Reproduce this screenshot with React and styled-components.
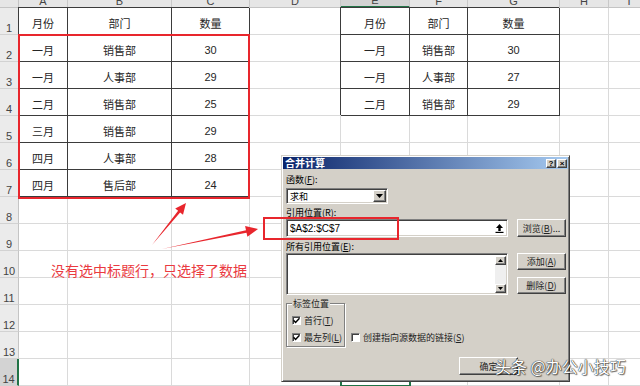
import styled, { createGlobalStyle, css } from 'styled-components';

const GlobalStyle = createGlobalStyle`
  *, *::before, *::after { box-sizing: border-box; }
  html, body { margin: 0; padding: 0; background: #fff; }
  body { font-family: "Liberation Sans", "Noto Sans CJK SC", sans-serif; }
`;

const GRID = '#dadada';
const EDGE = '#3b3b3b';
const GREEN = '#217346';
const RED = '#e8262d';

const Page = styled.div`
  position: relative;
  width: 640px;
  height: 386px;
  overflow: hidden;
  background: #fff;
`;

const Sheet = styled.div`
  display: grid;
  grid-template-columns: 19px 49px 104px 78px 91px 69px 58px 92px 49px 41px;
  grid-template-rows: 8px repeat(14, 27px);
`;

const Corner = styled.div`
  background: #e6e6e6;
  border-right: 1px solid #c4c4c4;
  border-bottom: 1px solid #c4c4c4;
`;

const ColHead = styled.div`
  display: flex;
  align-items: flex-end;
  justify-content: center;
  overflow: hidden;
  font-size: 11px;
  line-height: 11px;
  color: #444;
  background: ${p => (p.$active ? '#d3d3d3' : '#e6e6e6')};
  border-right: 1px solid #c8c8c8;
  border-bottom: ${p => (p.$active ? `2px solid ${GREEN}` : '1px solid #c4c4c4')};
`;

const RowHead = styled.div`
  display: flex;
  align-items: flex-end;
  justify-content: center;
  font-size: 11px;
  line-height: 12px;
  color: #444;
  background: ${p => (p.$active ? '#d3d3d3' : '#ebebeb')};
  border-right: ${p => (p.$active ? `2px solid ${GREEN}` : '1px solid #c4c4c4')};
  border-bottom: 1px solid #d2d2d2;
`;

const Cell = styled.div`
  display: flex;
  align-items: center;
  justify-content: center;
  padding-top: 4px;
  font-size: 11px;
  color: #262626;
  white-space: nowrap;
  border-right: 1px solid ${p => (p.$boxed ? EDGE : GRID)};
  border-bottom: 1px solid ${p => (p.$boxed ? EDGE : GRID)};
  ${p => p.$boxed && css`box-shadow: -1px -1px 0 ${EDGE};`}
  ${p =>
    p.$selected &&
    css`
      position: relative;
      z-index: 1;
      outline: 2px solid ${GREEN};
      outline-offset: -1px;
    `}
`;

/* ---------- dialog ---------- */

const sunken = css`
  background: #fff;
  border: 1px solid;
  border-color: #808080 #fff #fff #808080;
  box-shadow: inset 1px 1px 0 #404040, inset -1px -1px 0 #d4d0c8;
`;

const raised = css`
  background: #d4d0c8;
  border: 1px solid;
  border-color: #fff #404040 #404040 #fff;
  box-shadow: inset -1px -1px 0 #808080;
`;

const Dialog = styled.div`
  position: absolute;
  z-index: 2;
  left: 281px;
  top: 155px;
  width: 289px;
  height: 227px;
  padding: 1px;
  background: #d4d0c8;
  border: 1px solid;
  border-color: #d4d0c8 #404040 #404040 #d4d0c8;
  box-shadow: inset 1px 1px 0 #fff, inset -1px -1px 0 #808080;
  font-family: "Noto Sans CJK SC", sans-serif;
  font-size: 9px;
  color: #000;
`;

const TitleBar = styled.div`
  display: flex;
  align-items: center;
  justify-content: space-between;
  height: 12px;
  padding: 0 1px 0 2px;
  background: linear-gradient(to right, #0a246a, #a6caf0);
`;

const Title = styled.span`
  color: #fff;
  font-weight: 700;
  font-size: 10px;
  line-height: 12px;
`;

const TitleButtons = styled.div`
  display: flex;
  gap: 1px;
`;

const TitleBtn = styled.div`
  ${raised};
  width: 10px;
  height: 9px;
  display: flex;
  align-items: center;
  justify-content: center;
  font-family: "Liberation Sans", sans-serif;
  font-weight: 700;
  font-size: 8px;
  line-height: 7px;
  color: #000;
`;

const Body = styled.div`
  padding: 0 2px 0 3px;
`;

const Label = styled.div`
  line-height: 11px;
  white-space: nowrap;
  margin-top: ${p => p.$mt}px;
`;

const Select = styled.div`
  ${sunken};
  width: 102px;
  height: 16px;
  margin-top: 3px;
  display: flex;
  align-items: center;
  justify-content: space-between;
  padding: 0 1px 0 3px;
`;

const DropBtn = styled.div`
  ${raised};
  width: 13px;
  height: 12px;
  display: flex;
  align-items: center;
  justify-content: center;
`;

const Row = styled.div`
  display: flex;
  align-items: ${p => p.$align || 'flex-start'};
  gap: ${p => p.$gap ?? 9}px;
  margin-top: ${p => p.$mt || 0}px;
`;

const Field = styled.div`
  ${sunken};
  width: 222px;
  height: 18px;
  display: flex;
  align-items: center;
  justify-content: space-between;
  padding: 0 3px 0 3px;
  font-family: "Liberation Sans", sans-serif;
  font-size: 10px;
`;

const Button = styled.div`
  ${raised};
  width: ${p => p.$w || 49}px;
  height: ${p => p.$h || 18}px;
  display: flex;
  align-items: center;
  justify-content: center;
  white-space: nowrap;
  font-size: 9px;
  color: #222;
`;

const ButtonStack = styled.div`
  display: flex;
  flex-direction: column;
  gap: 7px;
`;

const ListBox = styled.div`
  ${sunken};
  width: 222px;
  height: 42px;
  display: flex;
  justify-content: flex-end;
  padding: 2px 1px 1px 2px;
`;

const ScrollBar = styled.div`
  width: 11px;
  display: flex;
  flex-direction: column;
  background: #efefef;
`;

const ScrollArrow = styled.div`
  ${raised};
  height: 9px;
  display: flex;
  align-items: center;
  justify-content: center;
`;

const ScrollTrack = styled.div`
  flex: 1;
`;

const Group = styled.fieldset`
  margin: 3px 0 0;
  padding: 0 3px 3px 5px;
  width: 59px;
  min-width: 0;
  border: 1px solid #808080;
  box-shadow: inset 1px 1px 0 #fff, 1px 1px 0 #fff;
`;

const GroupTitle = styled.legend`
  margin-left: 0;
  padding: 0 1px;
  line-height: 11px;
  font-size: 9px;
  background: #d4d0c8;
  color: #222;
`;

const CheckRow = styled.div`
  display: flex;
  align-items: center;
  gap: 3px;
  line-height: 11px;
  white-space: nowrap;
  margin-top: ${p => p.$mt || 0}px;
  margin-bottom: ${p => p.$mb || 0}px;
  margin-left: ${p => p.$ml || 0}px;
  color: #222;
`;

const Box = styled.span`
  width: 9px;
  height: 9px;
  flex: none;
  display: flex;
  align-items: center;
  justify-content: center;
  background: #fff;
  border: 1px solid;
  border-color: #808080 #fff #fff #808080;
  box-shadow: inset 1px 1px 0 #404040;
`;

const Footer = styled.div`
  display: flex;
  justify-content: flex-end;
  margin-top: 10px;
  padding-right: 48px;
`;

/* ---------- annotations ---------- */

const Frame = styled.div`
  position: absolute;
  z-index: 3;
  left: ${p => p.$x}px;
  top: ${p => p.$y}px;
  width: ${p => p.$w}px;
  height: ${p => p.$h}px;
  border: 2px solid ${RED};
  pointer-events: none;
`;

const Note = styled.div`
  position: absolute;
  z-index: 3;
  left: 51px;
  top: 262px;
  font-family: "Noto Sans CJK SC", sans-serif;
  font-size: 14px;
  line-height: 16px;
  color: #ea3a3f;
  white-space: nowrap;
`;

const Arrows = styled.svg`
  position: absolute;
  z-index: 3;
  left: 0;
  top: 0;
  pointer-events: none;
`;

const Watermark = styled.div`
  position: absolute;
  z-index: 4;
  left: 495px;
  top: 357px;
  font-family: "Noto Sans CJK SC", sans-serif;
  font-size: 16px;
  line-height: 18px;
  color: #fff;
  white-space: nowrap;
  text-shadow: 0 0 1px #222, 0 0 1px #222, 1px 1px 1px rgba(0, 0, 0, 0.5);
`;

const COLS = ['A', 'B', 'C', 'D', 'E', 'F', 'G', 'H', 'I'];

const LEFT = [
  ['月份', '部门', '数量'],
  ['一月', '销售部', '30'],
  ['一月', '人事部', '29'],
  ['二月', '销售部', '25'],
  ['三月', '销售部', '29'],
  ['四月', '人事部', '28'],
  ['四月', '售后部', '24'],
];

const RIGHT = [
  ['月份', '部门', '数量'],
  ['一月', '销售部', '30'],
  ['一月', '人事部', '27'],
  ['二月', '销售部', '29'],
];

const cellAt = (r, c) => {
  if (c < 3 && r < LEFT.length) return { text: LEFT[r][c], boxed: true };
  if (c >= 4 && c <= 6 && r < RIGHT.length) return { text: RIGHT[r][c - 4], boxed: true };
  return { text: '', boxed: false };
};

const Check = () => (
  <svg width="7" height="7" viewBox="0 0 7 7">
    <path d="M0.5 3.2 L2.6 5.4 L6.5 1.2" fill="none" stroke="#000" strokeWidth="1.5" />
  </svg>
);

const Down = () => (
  <svg width="7" height="4" viewBox="0 0 7 4">
    <path d="M0 0 H7 L3.5 4 Z" fill="#000" />
  </svg>
);

const Up = () => (
  <svg width="5" height="3" viewBox="0 0 5 3">
    <path d="M0 3 H5 L2.5 0 Z" fill="#000" />
  </svg>
);

const SmallDown = () => (
  <svg width="5" height="3" viewBox="0 0 5 3">
    <path d="M0 0 H5 L2.5 3 Z" fill="#000" />
  </svg>
);

const Collapse = () => (
  <svg width="9" height="10" viewBox="0 0 9 10">
    <path d="M4.5 1 L8 5 H5.7 V8 H3.3 V5 H1 Z" fill="#000" />
    <rect x="0.5" y="8.8" width="8" height="1.2" fill="#000" />
  </svg>
);

const SheetGrid = () => (
  <Sheet>
    <Corner />
    {COLS.map(c => (
      <ColHead key={c} $active={c === 'E'}>{c}</ColHead>
    ))}
    {Array.from({ length: 14 }, (_, r) => [
      <RowHead key={`h${r}`} $active={r === 13}>{r + 1}</RowHead>,
      ...COLS.map((c, ci) => {
        const cell = cellAt(r, ci);
        return (
          <Cell key={`${c}${r}`} $boxed={cell.boxed} $selected={r === 13 && c === 'E'}>
            {cell.text}
          </Cell>
        );
      }),
    ])}
  </Sheet>
);

const ConsolidateDialog = () => (
  <Dialog>
    <TitleBar>
      <Title>合并计算</Title>
      <TitleButtons>
        <TitleBtn>?</TitleBtn>
        <TitleBtn>×</TitleBtn>
      </TitleButtons>
    </TitleBar>
    <Body>
      <Label $mt={5}>函数(<u>F</u>):</Label>
      <Select>
        <span>求和</span>
        <DropBtn><Down /></DropBtn>
      </Select>
      <Label $mt={3}>引用位置(<u>R</u>):</Label>
      <Row $mt={1}>
        <Field>
          <span>$A$2:$C$7</span>
          <Collapse />
        </Field>
        <Button>浏览(<u>B</u>)...</Button>
      </Row>
      <Label $mt={4}>所有引用位置(<u>E</u>):</Label>
      <Row $mt={1}>
        <ListBox>
          <ScrollBar>
            <ScrollArrow><Up /></ScrollArrow>
            <ScrollTrack />
            <ScrollArrow><SmallDown /></ScrollArrow>
          </ScrollBar>
        </ListBox>
        <ButtonStack>
          <Button $h={17}>添加(<u>A</u>)</Button>
          <Button $h={17}>删除(<u>D</u>)</Button>
        </ButtonStack>
      </Row>
      <Row $align="flex-end" $gap={0}>
        <Group>
          <GroupTitle>标签位置</GroupTitle>
          <CheckRow $mt={6}>
            <Box><Check /></Box>
            <span>首行(<u>T</u>)</span>
          </CheckRow>
          <CheckRow $mt={6}>
            <Box><Check /></Box>
            <span>最左列(<u>L</u>)</span>
          </CheckRow>
        </Group>
        <CheckRow $ml={6} $mb={4}>
          <Box />
          <span>创建指向源数据的链接(<u>S</u>)</span>
        </CheckRow>
      </Row>
      <Footer>
        <Button $w={59}>确定</Button>
      </Footer>
    </Body>
  </Dialog>
);

export default function App() {
  return (
    <Page>
      <GlobalStyle />
      <SheetGrid />
      <ConsolidateDialog />
      <Frame $x={18} $y={34} $w={232} $h={165} />
      <Frame $x={263} $y={217} $w={136} $h={23} />
      <Note>没有选中标题行，只选择了数据</Note>
      <Arrows width="640" height="386" viewBox="0 0 640 386">
        <polygon
          points="152,245 180.1,212.4 183,214.8 186,203 175.2,208.5 178.1,210.8"
          fill={RED}
        />
        <polygon
          points="162,249 246.5,232.7 247.4,236.8 258,229 245.1,226.1 246,230.2"
          fill={RED}
        />
      </Arrows>
      <Watermark>头条 @办公小技巧</Watermark>
    </Page>
  );
}
